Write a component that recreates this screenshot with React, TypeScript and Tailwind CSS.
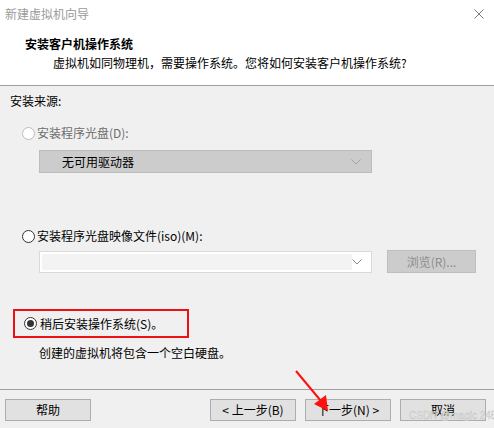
import type { ReactNode } from "react";

const font = { fontFamily: '"Microsoft YaHei UI", "Noto Sans CJK SC", "Noto Sans", sans-serif' };

const Radio = ({ checked = false, disabled = false }: { checked?: boolean; disabled?: boolean }) => (
  <span
    className={
      "flex h-[13px] w-[13px] shrink-0 items-center justify-center rounded-full border bg-white " +
      (disabled ? "border-[#bcbcbc]" : "border-[#333333]")
    }
  >
    {checked && <span className="h-[7px] w-[7px] rounded-full bg-[#333333]" />}
  </span>
);

const Chevron = ({ color }: { color: string }) => (
  <svg width="10" height="6" viewBox="0 0 10 6">
    <path d="M0.5 0.5 L5 5 L9.5 0.5" fill="none" stroke={color} strokeWidth="1" />
  </svg>
);

const Button = ({ children, className = "" }: { children: ReactNode; className?: string }) => (
  <div
    className={
      "flex h-[22px] w-[86px] items-center justify-center border border-[#adadad] bg-[#e1e1e1] text-[12px] text-black " +
      className
    }
  >
    {children}
  </div>
);

export default function App() {
  return (
    <div className="relative flex h-[428px] w-[494px] flex-col overflow-hidden bg-[#f0f0f0]" style={font}>
      {/* 헤더 */}
      <div className="h-[86px] border-b border-[#a0a0a0] bg-white">
        <div className="flex h-[27px] items-center justify-between pl-[5px] pr-[10px]">
          <span className="text-[12px] text-[#9a9a9a]">新建虚拟机向导</span>
          <svg width="10" height="10" viewBox="0 0 10 10">
            <path d="M0.5 0.5 L9.5 9.5 M9.5 0.5 L0.5 9.5" stroke="#7a7a7a" strokeWidth="1" />
          </svg>
        </div>
        <div className="mt-[9px] pl-[25px] text-[12px] font-bold leading-[16px] text-black">安装客户机操作系统</div>
        <div className="mt-[3px] pl-[53px] text-[12px] leading-[16px] text-black">
          虚拟机如同物理机，需要操作系统。您将如何安装客户机操作系统?
        </div>
      </div>

      {/* 본문 */}
      <div className="h-[304px] border-b border-[#a0a0a0] text-[12px] leading-[16px]">
        <div className="mt-[7px] pl-[10px] text-black">安装来源:</div>

        <div className="mt-[16px] flex items-center gap-[2px] pl-[22px] text-[#6d6d6d]">
          <Radio disabled />
          <span>安装程序光盘(D):</span>
        </div>

        <div className="ml-[39px] mt-[9px] flex h-[23px] w-[333px] items-center justify-between border border-[#bcbcbc] bg-[#cccccc] pl-[22px] pr-[10px] text-black">
          <span>无可用驱动器</span>
          <Chevron color="#a5a5a5" />
        </div>

        <div className="mt-[55px] flex items-center gap-[2px] pl-[22px] text-black">
          <Radio />
          <span>安装程序光盘映像文件(iso)(M):</span>
        </div>

        <div className="ml-[39px] mt-[6px] flex items-center gap-[15px]">
          <div className="flex h-[22px] w-[333px] items-center border border-[#d9d9d9] bg-white pl-[2px] pr-[9px]">
            <div className="h-[16px] w-[310px] bg-[#f3f3f3]" />
            <div className="flex flex-1 justify-end">
              <Chevron color="#8a8a8a" />
            </div>
          </div>
          <div className="flex h-[23px] w-[89px] items-center justify-center border border-[#bfbfbf] bg-[#cccccc] text-[#8d8d8d]">
            浏览(R)...
          </div>
        </div>

        <div className="ml-[13px] mt-[36px] flex h-[29px] w-[176px] items-center gap-[3px] border-2 border-[#ee1111] pl-[9px] text-black">
          <Radio checked />
          <span>稍后安装操作系统(S)。</span>
        </div>

        <div className="mt-[7px] pl-[39px] text-black">创建的虚拟机将包含一个空白硬盘。</div>
      </div>

      {/* 버튼 */}
      <div className="flex pl-[5px] pt-[9px]">
        <Button>帮助</Button>
        <div className="ml-[119px] flex gap-[9px]">
          <Button>&lt; 上一步(B)</Button>
          <Button>下一步(N) &gt;</Button>
          <Button>取消</Button>
        </div>
      </div>

      {/* 화살표 주석 */}
      <svg className="absolute left-0 top-0" width="494" height="428" viewBox="0 0 494 428">
        <line x1="296" y1="371" x2="321" y2="401" stroke="#ff1010" strokeWidth="2" />
        <polygon points="328,411 314,404 326,395" fill="#ff1010" />
      </svg>

      <span
        className="absolute left-[409px] top-[409px] whitespace-nowrap text-[10px] leading-[14px] text-[#e6e6e6]"
        style={{ fontFamily: '"Liberation Sans", Arial, sans-serif', WebkitTextStroke: "0.4px #c4c4c4" }}
      >
        CSDN @magic 245
      </span>
    </div>
  );
}
